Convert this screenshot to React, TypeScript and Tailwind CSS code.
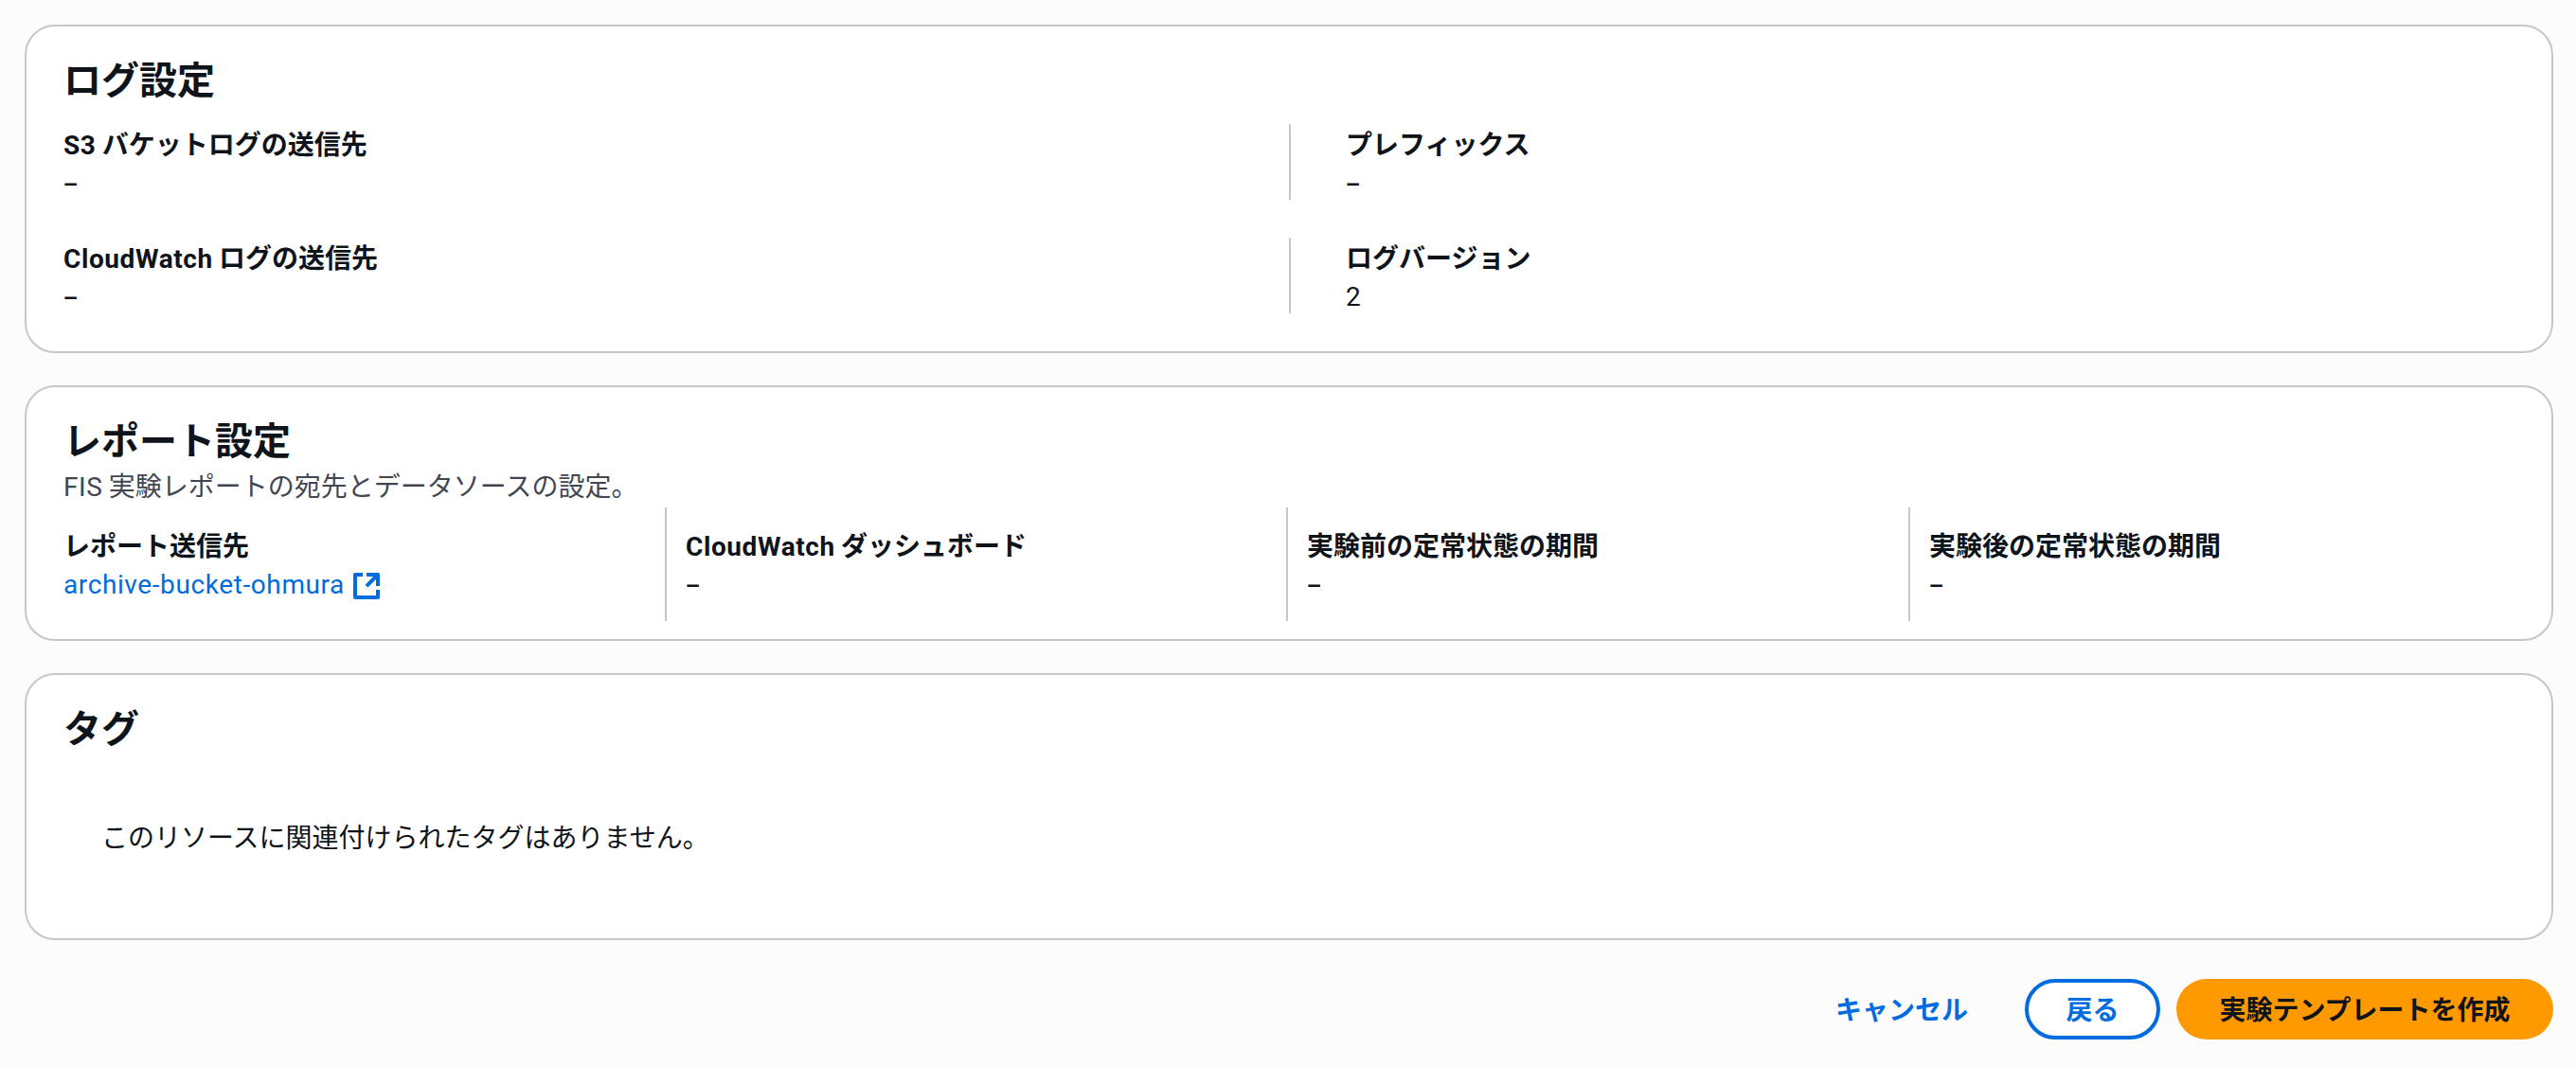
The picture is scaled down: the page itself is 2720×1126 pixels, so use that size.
import { ReactNode } from "react";

const font = "[font-family:'Noto_Sans_CJK_JP',sans-serif]";

// latin text sits in Roboto, slightly opened up
function Latin({ children }: { children: ReactNode }) {
  return <span className="font-[Roboto] leading-none tracking-[0.6px]">{children}</span>;
}

function Card({ title, children }: { title: string; children: ReactNode }) {
  return (
    <section className="rounded-[32px] border-2 border-[#c6c6cd] bg-white px-[39px] pt-[30px]">
      <h2 className="text-[40px] leading-[48px] font-bold text-[#0f141a]">{title}</h2>
      {children}
    </section>
  );
}

function Item({ label, children }: { label: ReactNode; children: ReactNode }) {
  return (
    <div>
      <div className="text-[28px] leading-10 font-bold text-[#0f141a]">{label}</div>
      <div className="text-[28px] leading-10 text-[#0f141a]">{children}</div>
    </div>
  );
}

function Dash() {
  return <span className="font-bold">–</span>;
}

// external link icon
function ExternalIcon() {
  return (
    <svg viewBox="0 0 16 16" className="ml-[7px] inline-block h-8 w-8 align-[-8px]" fill="none" stroke="#006ce0" strokeWidth="2">
      <path d="M14 8.01v-6H8M14.02 2 8 8.02M6 2.01H2V14h12v-3.99" strokeLinejoin="round" />
    </svg>
  );
}

export default function App() {
  return (
    <div className={`${font} flex min-h-screen flex-col bg-[#fcfcfd] pt-[26px] pr-6 pl-[26px]`}>
      <div className="flex flex-col gap-[34px]">
        <Card title="ログ設定">
          <div className="mt-[25px] grid grid-cols-2 gap-y-10 pb-10">
            <Item label={<><Latin>S3</Latin> バケットログの送信先</>}><Dash /></Item>
            <div className="border-l-2 border-[#c6c6cd] pl-[58px]">
              <Item label="プレフィックス"><Dash /></Item>
            </div>
            <Item label={<><Latin>CloudWatch</Latin> ログの送信先</>}><Dash /></Item>
            <div className="border-l-2 border-[#c6c6cd] pl-[58px]">
              <Item label="ログバージョン"><Latin>2</Latin></Item>
            </div>
          </div>
        </Card>

        <Card title="レポート設定">
          <p className="mt-[5px] text-[28px] leading-10 text-[#424650]"><Latin>FIS</Latin> 実験レポートの宛先とデータソースの設定。</p>
          <div className="mt-1 grid grid-cols-[635fr_656fr_657fr_640fr] pb-[19px]">
            <div className="pt-[19px] pb-[21px]">
              <Item label="レポート送信先">
                <a className="text-[#006ce0]">
                  <Latin>archive-bucket-ohmura</Latin>
                  <ExternalIcon />
                </a>
              </Item>
            </div>
            <div className="border-l-2 border-[#c6c6cd] pt-[19px] pb-[21px] pl-5">
              <Item label={<><Latin>CloudWatch</Latin> ダッシュボード</>}><Dash /></Item>
            </div>
            <div className="border-l-2 border-[#c6c6cd] pt-[19px] pb-[21px] pl-5">
              <Item label="実験前の定常状態の期間"><Dash /></Item>
            </div>
            <div className="border-l-2 border-[#c6c6cd] pt-[19px] pb-[21px] pl-5">
              <Item label="実験後の定常状態の期間"><Dash /></Item>
            </div>
          </div>
        </Card>

        <Card title="タグ">
          <p className="pt-[72px] pb-[88px] pl-10 text-[28px] leading-10 text-[#0f141a]">
            このリソースに関連付けられたタグはありません。
          </p>
        </Card>
      </div>

      <div className="mt-[41px] flex items-center justify-end">
        <button className="mr-[60px] pb-0.5 text-[28px] leading-10 font-bold text-[#006ce0]">キャンセル</button>
        <button className="mr-[17px] h-16 w-[143px] rounded-full border-4 border-[#006ce0] bg-white pb-0.5 text-[28px] font-bold text-[#006ce0]">
          戻る
        </button>
        <button className="h-16 w-[398px] rounded-full bg-[#ff9900] pb-0.5 text-[28px] font-bold text-[#0f141a]">
          実験テンプレートを作成
        </button>
      </div>
    </div>
  );
}
